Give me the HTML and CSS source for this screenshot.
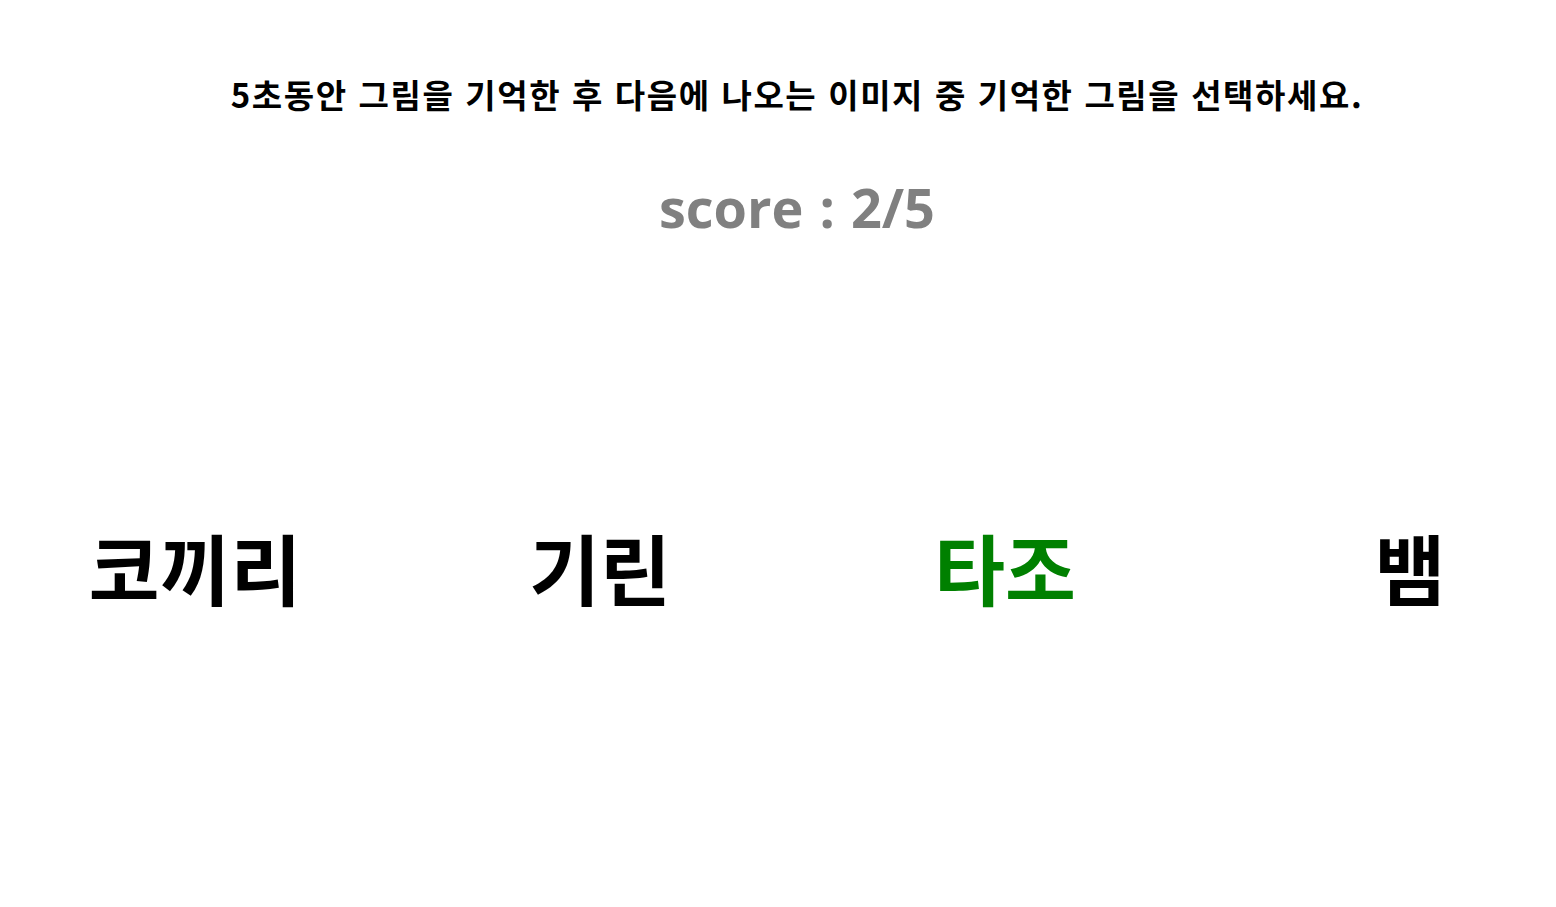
FILE: index.html
```html
<!DOCTYPE html>
<html lang="ko">
<head>
<meta charset="utf-8">
<link rel="stylesheet" href="styles.css">
</head>
<body>
<div class="game">
  <h1 class="instruction">5초동안 그림을 기억한 후 다음에 나오는 이미지 중 기억한 그림을 선택하세요.</h1>
  <div class="score">score : 2/5</div>
  <div class="choices">
    <div class="choice">코끼리</div>
    <div class="choice">기린</div>
    <div class="choice correct">타조</div>
    <div class="choice">뱀</div>
  </div>
</div>
</body>
</html>
```
FILE: styles.css
```css
html, body {
  margin: 0;
  padding: 0;
  background: #fff;
  overflow: hidden;
}
body {
  font-family: "Noto Sans CJK KR", "Noto Sans", sans-serif;
  color: #000;
}
.game {
  display: flex;
  flex-direction: column;
  align-items: center;
  width: 1594px;
}
.instruction {
  margin: 70px 0 0;
  font-size: 33px;
  font-weight: 700;
  line-height: 48px;
  letter-spacing: 1.6px;
}
.score {
  margin-top: 54px;
  font-family: "Open Sans", "Noto Sans", sans-serif;
  font-size: 54px;
  font-weight: 700;
  color: #808080;
  line-height: 70px;
  word-spacing: 2px;
}
.choices {
  align-self: flex-start;
  display: flex;
  gap: 15px;
  margin-top: 275px;
}
.choice {
  flex: 0 0 390px;
  text-align: center;
  font-size: 77px;
  font-weight: 700;
  line-height: 100px;
}
.choice.correct {
  color: #008000;
}
```
